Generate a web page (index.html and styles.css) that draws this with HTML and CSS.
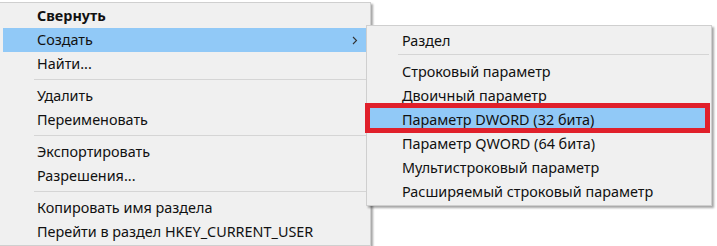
FILE: index.html
```html
<!DOCTYPE html>
<html lang="ru">
<head>
<meta charset="utf-8">
<title>Меню</title>
<link rel="stylesheet" href="styles.css">
</head>
<body>
<div class="stage">
  <div class="menu main">
    <div class="item bold">Свернуть</div>
    <div class="item hl has-sub">Создать
      <svg class="chev" width="6" height="9" viewBox="0 0 6 9"><polyline points="1,1 4.5,4.5 1,8" fill="none" stroke="#333" stroke-width="1.1"/></svg>
    </div>
    <div class="item">Найти...</div>
    <div class="sep"></div>
    <div class="item">Удалить</div>
    <div class="item">Переименовать</div>
    <div class="sep"></div>
    <div class="item">Экспортировать</div>
    <div class="item">Разрешения...</div>
    <div class="sep"></div>
    <div class="item">Копировать имя раздела</div>
    <div class="item">Перейти в раздел HKEY_CURRENT_USER</div>
  </div>
  <div class="menu sub">
    <div class="item">Раздел</div>
    <div class="sep sub-sep"></div>
    <div class="item">Строковый параметр</div>
    <div class="item">Двоичный параметр</div>
    <div class="item hl marked">Параметр DWORD (32 бита)</div>
    <div class="item">Параметр QWORD (64 бита)</div>
    <div class="item">Мультистроковый параметр</div>
    <div class="item">Расширяемый строковый параметр</div>
  </div>
</div>
</body>
</html>
```

FILE: styles.css
```css
html, body {
  margin: 0;
  padding: 0;
  background: #ffffff;
}
body {
  width: 717px;
  height: 246px;
  overflow: hidden;
  font-family: "Noto Sans", "Open Sans", sans-serif;
  font-size: 14.4px;
  color: #111;
}
.stage {
  position: relative;
  padding-top: 2px;
}
.menu {
  background: #f0f0f0;
  border: 1px solid #cfcfcf;
  box-sizing: border-box;
  box-shadow: 2px 2px 2px rgba(0, 0, 0, 0.35);
}
.main {
  width: 372px;
  margin-left: -1px;
  padding: 1px 0;
}
.item {
  height: 24px;
  line-height: 23px;
  padding-left: 34px;
  margin: 0 4px 0 3px;
  white-space: nowrap;
  position: relative;
}
.bold {
  font-weight: bold;
}
.hl {
  background: #91c9f7;
}
.has-sub .chev {
  position: absolute;
  right: 8px;
  top: 8px;
}
.sep {
  height: 1px;
  background: #d5d5d5;
  margin: 3px 1px 4px 34px;
}
.sub {
  position: absolute;
  left: 366px;
  top: 25px;
  width: 346px;
  padding: 3px 0 1px;
}
.sub .item {
  margin: 0 3px 0 1px;
}
.sub-sep {
  margin: 1px 2px 5px 31px;
}
.marked::after {
  content: "";
  position: absolute;
  left: -3px;
  right: -2px;
  top: -5px;
  bottom: -1px;
  border: 5px solid #e0202b;
}
```
